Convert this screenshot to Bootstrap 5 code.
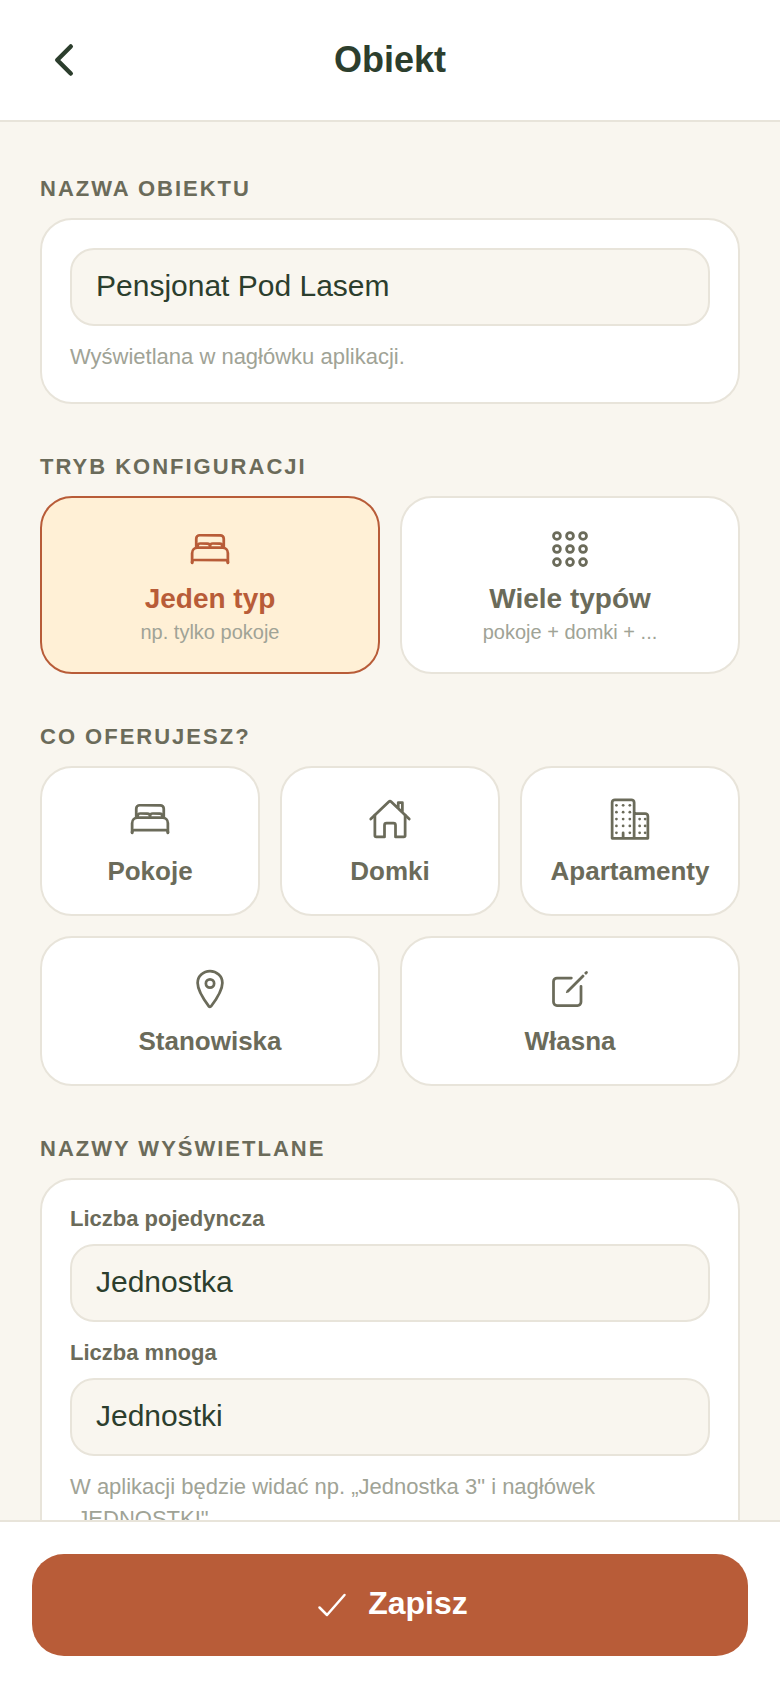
<!DOCTYPE html>
<html lang="pl">
<head>
<meta charset="utf-8">
<title>Obiekt</title>
<link href="https://cdn.jsdelivr.net/npm/bootstrap@5.3.0/dist/css/bootstrap.min.css" rel="stylesheet">
<style>
html,body{height:100%;margin:0}
body{font-family:"Liberation Sans",Arial,sans-serif;background:#f9f6ef;color:#2c3e2d;overflow:hidden}
.shell{height:1688px;width:780px}
.topbar{height:122px;background:#fff;border-bottom:2px solid #e8e4da;padding:0 40px}
.back-btn{width:48px;height:48px;color:#2c3e2d;margin-top:-1px}
.back-btn svg{width:48px;height:48px}
.page-title{font-size:36px;font-weight:700;line-height:44px;margin:0;color:#2c3e2d}
.title-wrap{left:0;right:0;top:38px;text-align:center}
.scroller{overflow:hidden;padding:54px 40px 0}
.sect-label{font-size:22px;font-weight:700;letter-spacing:2px;line-height:26px;color:#6b6b5a;margin-bottom:16px;text-transform:uppercase}
.sect{margin-bottom:50px}
.panel{background:#fff;border:2px solid #e8e4da;border-radius:32px;padding:28px}
.panel-tight{padding-top:26px}
.field{height:78px;background:#f9f6ef!important;border:2px solid #e8e4da!important;border-radius:24px;font-size:30px;color:#2c3e2d!important;padding:0 24px 2px;box-shadow:none!important}
.hint{font-size:22px;line-height:32px;color:#a0a396;margin-top:15px;margin-bottom:1px}
.field-label{font-size:22px;font-weight:700;line-height:26px;color:#6b6b5a;margin-bottom:12px}
.field-label-next{margin-top:18px}
.pick{background:#fff;border:2px solid #e8e4da;border-radius:32px;color:#6b6b5a;text-align:center;flex:1 1 0;min-width:0;padding:29px 4px 0}
.pick svg{width:44px;height:44px;display:block;margin:0 auto}
.pick-tall{height:178px}
.pick-short{height:150px}
.pick-on{background:#fff0d6;border-color:#b85c38;color:#b85c38}
.pick-name{font-size:28px;font-weight:700;line-height:34px;margin-top:11px;color:inherit}
.pick-short .pick-name{font-size:26px;margin-top:13px}
.pick-sub{font-size:20px;line-height:28px;color:#a0a396;margin-top:2px}
.bottombar{height:168px;background:#fff;border-top:2px solid #e8e4da;padding:32px 32px 0}
.save-btn{width:716px;height:102px;background:#b85c38!important;border:0!important;border-radius:32px;color:#fff!important;font-size:32px;font-weight:700;gap:16px;padding:0 0 4px}
.save-btn svg{width:40px;height:40px;margin-top:3px}
.ic{fill:none;stroke:currentColor;stroke-width:32;stroke-linecap:round;stroke-linejoin:round}
</style>
</head>
<body>
<div class="shell d-flex flex-column">
  <header class="topbar position-relative d-flex align-items-center flex-shrink-0">
    <button type="button" class="back-btn btn p-0 border-0 d-flex" aria-label="Wstecz">
      <svg viewBox="0 0 512 512" class="ic" style="stroke-width:48"><path d="M328 112L184 256l144 144"/></svg>
    </button>
    <div class="title-wrap position-absolute"><h1 class="page-title">Obiekt</h1></div>
  </header>

  <main class="scroller flex-grow-1">
    <section class="sect">
      <div class="sect-label">Nazwa obiektu</div>
      <div class="panel">
        <input class="form-control field" type="text" value="Pensjonat Pod Lasem">
        <div class="hint">Wyświetlana w nagłówku aplikacji.</div>
      </div>
    </section>

    <section class="sect">
      <div class="sect-label">Tryb konfiguracji</div>
      <div class="d-flex" style="gap:20px">
        <div class="pick pick-tall pick-on">
          <svg viewBox="0 0 512 512" class="ic"><path d="M384 240H96V136a40.12 40.12 0 0140-40h240a40.12 40.12 0 0140 40v104zM48 416V304a64.19 64.19 0 0164-64h288a64.19 64.19 0 0164 64v112"/><path d="M48 416v-8a24.07 24.07 0 0124-24h368a24.07 24.07 0 0124 24v8M112 240v-16a32.09 32.09 0 0132-32h80a32.09 32.09 0 0132 32v16M256 240v-16a32.09 32.09 0 0132-32h80a32.09 32.09 0 0132 32v16"/></svg>
          <div class="pick-name">Jeden typ</div>
          <div class="pick-sub">np. tylko pokoje</div>
        </div>
        <div class="pick pick-tall">
          <svg viewBox="0 0 512 512" class="ic"><rect x="64" y="64" width="80" height="80" rx="40"/><rect x="216" y="64" width="80" height="80" rx="40"/><rect x="368" y="64" width="80" height="80" rx="40"/><rect x="64" y="216" width="80" height="80" rx="40"/><rect x="216" y="216" width="80" height="80" rx="40"/><rect x="368" y="216" width="80" height="80" rx="40"/><rect x="64" y="368" width="80" height="80" rx="40"/><rect x="216" y="368" width="80" height="80" rx="40"/><rect x="368" y="368" width="80" height="80" rx="40"/></svg>
          <div class="pick-name">Wiele typów</div>
          <div class="pick-sub">pokoje + domki + ...</div>
        </div>
      </div>
    </section>

    <section class="sect">
      <div class="sect-label">Co oferujesz?</div>
      <div class="d-flex" style="gap:20px;margin-bottom:20px">
        <div class="pick pick-short">
          <svg viewBox="0 0 512 512" class="ic"><path d="M384 240H96V136a40.12 40.12 0 0140-40h240a40.12 40.12 0 0140 40v104zM48 416V304a64.19 64.19 0 0164-64h288a64.19 64.19 0 0164 64v112"/><path d="M48 416v-8a24.07 24.07 0 0124-24h368a24.07 24.07 0 0124 24v8M112 240v-16a32.09 32.09 0 0132-32h80a32.09 32.09 0 0132 32v16M256 240v-16a32.09 32.09 0 0132-32h80a32.09 32.09 0 0132 32v16"/></svg>
          <div class="pick-name">Pokoje</div>
        </div>
        <div class="pick pick-short">
          <svg viewBox="0 0 512 512" class="ic"><path d="M80 212v236a16 16 0 0016 16h96V328a24 24 0 0124-24h80a24 24 0 0124 24v136h96a16 16 0 0016-16V212"/><path d="M480 256L266.89 52c-5-5.28-16.69-5.34-21.78 0L32 256M400 179V64h-48v69"/></svg>
          <div class="pick-name">Domki</div>
        </div>
        <div class="pick pick-short">
          <svg viewBox="0 0 512 512"><g class="ic"><path d="M176 416v64M80 32h192a32 32 0 0132 32v412a4 4 0 01-4 4H48V64a32 32 0 0132-32zM320 192h112a32 32 0 0132 32v256H304V208a16 16 0 0116-16z"/></g><g fill="currentColor"><circle cx="98" cy="416" r="16"/><circle cx="98" cy="336" r="16"/><circle cx="98" cy="256" r="16"/><circle cx="98" cy="176" r="16"/><circle cx="98" cy="96" r="16"/><circle cx="176" cy="336" r="16"/><circle cx="176" cy="256" r="16"/><circle cx="176" cy="176" r="16"/><circle cx="176" cy="96" r="16"/><circle cx="254" cy="416" r="16"/><circle cx="254" cy="336" r="16"/><circle cx="254" cy="256" r="16"/><circle cx="254" cy="176" r="16"/><circle cx="254" cy="96" r="16"/><circle cx="368" cy="416" r="16"/><circle cx="368" cy="336" r="16"/><circle cx="368" cy="256" r="16"/><circle cx="432" cy="416" r="16"/><circle cx="432" cy="336" r="16"/><circle cx="432" cy="256" r="16"/></g></svg>
          <div class="pick-name">Apartamenty</div>
        </div>
      </div>
      <div class="d-flex" style="gap:20px">
        <div class="pick pick-short">
          <svg viewBox="0 0 512 512" class="ic"><path d="M256 48c-79.5 0-144 61.39-144 137 0 87 96 224.87 131.25 272.49a15.77 15.77 0 0025.5 0C304 409.89 400 272.07 400 185c0-75.61-64.5-137-144-137z"/><circle cx="256" cy="192" r="48"/></svg>
          <div class="pick-name">Stanowiska</div>
        </div>
        <div class="pick pick-short">
          <svg viewBox="0 0 512 512"><path class="ic" d="M384 224v184a40 40 0 01-40 40H104a40 40 0 01-40-40V168a40 40 0 0140-40h167.48"/><path fill="currentColor" d="M459.94 53.25a16.06 16.06 0 00-23.22-.56L424.35 65a8 8 0 000 11.31l11.34 11.32a8 8 0 0011.34 0l12.06-12c6.1-6.09 6.67-16.01.85-22.38zM399.34 90L218.82 270.2a9 9 0 00-2.31 3.93L208.16 299a3.91 3.91 0 004.86 4.86l24.85-8.35a9 9 0 003.93-2.31L422 112.66a9 9 0 000-12.66l-9.95-10a9 9 0 00-12.71 0z"/></svg>
          <div class="pick-name">Własna</div>
        </div>
      </div>
    </section>

    <section>
      <div class="sect-label">Nazwy wyświetlane</div>
      <div class="panel panel-tight">
        <div class="field-label">Liczba pojedyncza</div>
        <input class="form-control field" type="text" value="Jednostka">
        <div class="field-label field-label-next">Liczba mnoga</div>
        <input class="form-control field" type="text" value="Jednostki">
        <div class="hint">W aplikacji będzie widać np. „Jednostka 3" i nagłówek „JEDNOSTKI".</div>
      </div>
    </section>
  </main>

  <footer class="bottombar flex-shrink-0">
    <button type="button" class="save-btn btn d-flex align-items-center justify-content-center">
      <svg viewBox="0 0 512 512" class="ic"><path d="M416 128L192 384l-96-96"/></svg>
      <span>Zapisz</span>
    </button>
  </footer>
</div>
<script src="https://cdn.jsdelivr.net/npm/bootstrap@5.3.0/dist/js/bootstrap.bundle.min.js"></script>
</body>
</html>
